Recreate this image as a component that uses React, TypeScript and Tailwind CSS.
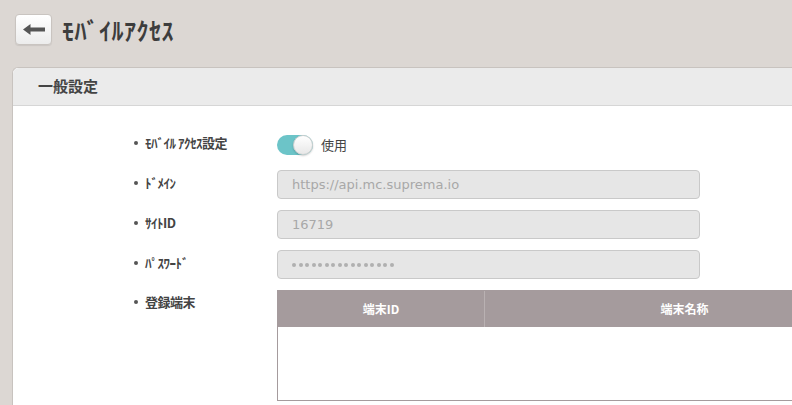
import React from "react";

const jp = { fontFamily: '"Noto Sans CJK JP", "Noto Sans", sans-serif' };
const latin = { fontFamily: 'Tahoma, "DejaVu Sans", "Noto Sans CJK JP", sans-serif' };

function Row({ label, children, top }: { label: string; children: React.ReactNode; top?: boolean }) {
  return (
    <div className={`flex ${top ? "items-start" : "items-center"}`}>
      <div className={`w-[146px] shrink-0 flex items-center pl-[3px] ${top ? "h-[24px]" : "-mt-[3px]"}`}>
        <span className="w-[4px] h-[4px] rounded-full bg-[#555] mr-[7px]" />
        <span className="text-[13px] font-bold text-[#444] tracking-[-0.5px]" style={jp}>{label}</span>
      </div>
      {children}
    </div>
  );
}

function Field({ value, dots }: { value?: string; dots?: number }) {
  return (
    <div className="w-[423px] shrink-0 h-[29px] rounded-[4px] border border-[#c9c9c9] bg-[#e6e6e6] flex items-center pl-[14px] text-[13px] text-[#a8a8a8]" style={latin}>
      {dots ? (
        <div className="flex gap-[2.5px]">
          {Array.from({ length: dots }).map((_, i) => (
            <span key={i} className="w-[4px] h-[4px] rounded-full bg-[#b0b0b0]" />
          ))}
        </div>
      ) : (
        value
      )}
    </div>
  );
}

export default function App() {
  return (
    <div className="w-[792px] h-[405px] bg-[#dcd7d3] overflow-hidden" style={jp}>
      <div className="flex items-center h-[58px] pl-[15px] pt-[1px]">
        <button className="w-[37px] h-[31px] shrink-0 rounded-[4px] border border-[#c9c4c0] bg-gradient-to-b from-white to-[#ececec] shadow-[0_1px_1px_rgba(0,0,0,0.08)] flex items-center justify-center">
          <svg width="22" height="11" viewBox="0 0 22 11">
            <path d="M0 5.5 L7.5 0 L7.5 3.5 L22 3.5 L22 7.5 L7.5 7.5 L7.5 11 Z" fill="#555" />
          </svg>
        </button>
        <h1 className="ml-[10px] text-[24px] font-bold text-[#3d3d3d] tracking-[0.5px] leading-none">ﾓﾊﾞｲﾙｱｸｾｽ</h1>
      </div>
      <div className="ml-[12px] mt-[9px] w-[800px] h-[400px] rounded-tl-[6px] border-l border-t border-[#c8c3bf] bg-white">
        <div className="h-[38px] bg-[#ebebeb] border-b border-[#d6d6d6] rounded-tl-[6px] flex items-center pl-[25px]">
          <span className="text-[15px] font-bold text-[#444]">一般設定</span>
        </div>
        <div className="pl-[118px] pt-[24px] flex flex-col gap-[11px]">
          <Row label="ﾓﾊﾞｲﾙ ｱｸｾｽ設定">
            <div className="flex items-center h-[29px]">
              <div className="relative w-[36px] h-[20px] rounded-full bg-[#6cc4c8]">
                <div className="absolute right-0 top-0 w-[20px] h-[20px] rounded-full bg-gradient-to-b from-white to-[#e8e8e8] border border-[#d0d0d0] shadow-[0_1px_2px_rgba(0,0,0,0.2)]" />
              </div>
              <span className="ml-[8px] text-[13px] text-[#444]">使用</span>
            </div>
          </Row>
          <Row label="ﾄﾞﾒｲﾝ"><Field value="https://api.mc.suprema.io" /></Row>
          <Row label="ｻｲﾄID"><Field value="16719" /></Row>
          <Row label="ﾊﾟｽﾜｰﾄﾞ"><Field dots={16} /></Row>
          <Row label="登録端末" top>
            <div className="w-[608px] shrink-0 h-[111px] border border-[#a59b9d] flex flex-col">
              <div className="h-[36px] bg-[#a59b9d] flex text-white text-[12px] font-bold">
                <div className="w-[207px] border-r border-[#b9b1b2] flex items-center justify-center">端末ID</div>
                <div className="flex-1 flex items-center justify-center">端末名称</div>
              </div>
              <div className="flex-1 bg-white" />
            </div>
          </Row>
        </div>
      </div>
    </div>
  );
}
